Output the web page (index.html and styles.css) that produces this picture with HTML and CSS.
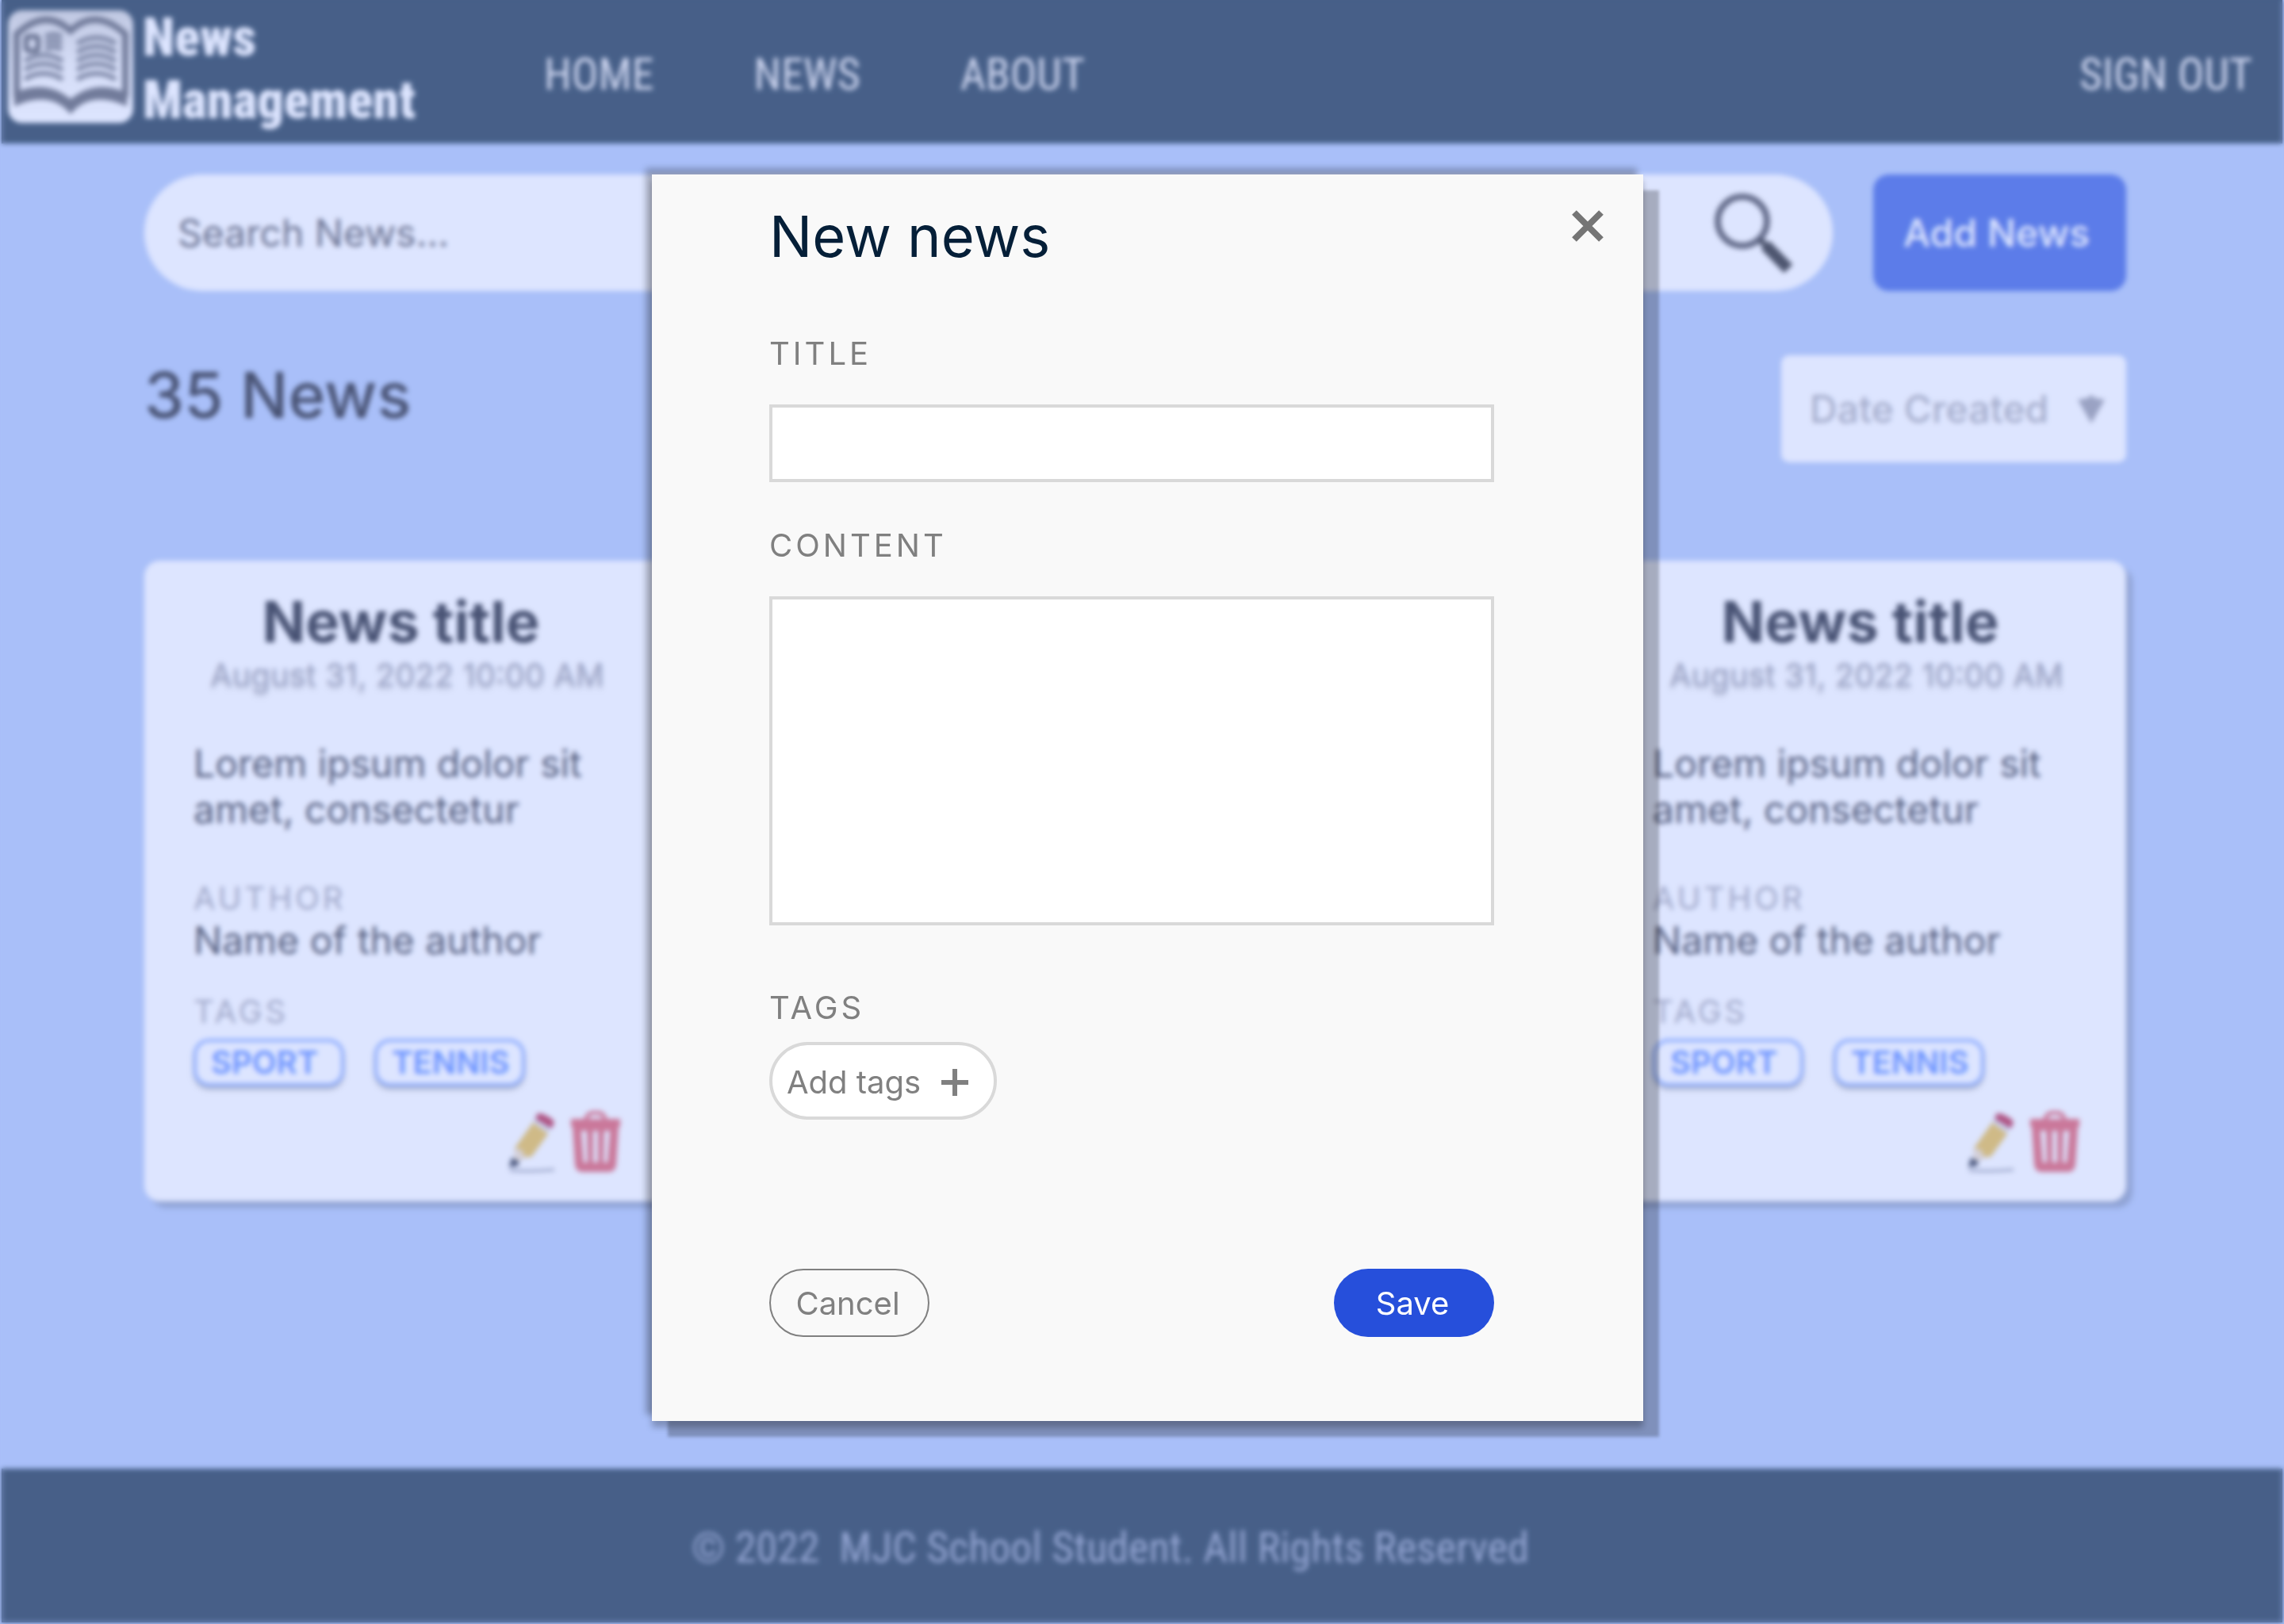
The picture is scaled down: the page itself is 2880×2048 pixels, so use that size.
FILE: index.html
```html
<!DOCTYPE html>
<html lang="en">
<head>
<meta charset="utf-8">
<meta name="viewport" content="width=device-width, initial-scale=1">
<title>News Management</title>
<link rel="stylesheet" href="styles.css">
</head>
<body>
<svg class="sprite" aria-hidden="true">
  <symbol id="pencil" viewBox="0 0 60 76">
    <path d="M2 73Q30 75 58 72" fill="none" stroke="#8a8fa0" stroke-width="3"/>
    <path d="M33 9L52 22L30 55L6 64L8 45Z" fill="#efdcc0"/>
    <path d="M31 13L50 27L29 56L20 55L17 47L8 45Z" fill="#e8b838"/>
    <path d="M4 57L14 62L12 67L1 69Z" fill="#10182c"/>
    <path d="M31 11L51 25L54 20L35 7Z" fill="#d8dce4"/>
    <path d="M37 1Q44 0 56 9Q60 13 54 20L34 8Z" fill="#b30f33"/>
  </symbol>
  <symbol id="trash" viewBox="0 0 64 78">
    <path d="M20 10Q22 2 32 2Q42 2 44 10" fill="none" stroke="#e04a58" stroke-width="5"/>
    <path fill-rule="evenodd" fill="#e04a58" d="M1 10H63V20H61L58 68Q57 77 48 77H16Q7 77 6 68L3 20H1ZM14 25L17 65H22L21 25ZM29 25V65H35V25ZM43 25L42 65H47L50 25Z"/>
  </symbol>
</svg>

<div class="page">
  <header class="header">
    <a class="brand" href="#">
      <svg class="brand-logo" viewBox="0 0 158 142" aria-hidden="true">
        <defs><linearGradient id="tile" x1="0" y1="0" x2="0" y2="1"><stop offset="0" stop-color="#cfcfcf"/><stop offset=".5" stop-color="#f2f2f2"/><stop offset="1" stop-color="#fff"/></linearGradient></defs>
        <rect width="158" height="142" rx="18" fill="url(#tile)"/>
        <path d="M11 110V30Q48-4 79 26Q110-4 148 30V110" fill="none" stroke="#4c4f58" stroke-width="8"/>
        <path d="M8 104Q48 86 79 112Q110 86 150 104V121Q104 100 79 131Q54 100 8 121Z" fill="#4c4f58"/>
        <g fill="none" stroke="#62656e" stroke-width="6">
          <path d="M87 42Q112 27 136 42M87 53Q112 38 136 53M87 64Q112 49 136 64M87 75Q112 60 136 75M87 87Q112 72 136 87"/>
          <path d="M21 64Q45 49 69 64M21 75Q45 60 69 75M21 87Q45 72 69 87"/>
          <path d="M47 33Q58 28 68 33M47 41Q58 36 68 41M47 49Q58 44 68 49"/>
          <rect x="23" y="33" width="15" height="18" rx="3" stroke="#3c3f48"/>
        </g>
      </svg>
      <span class="brand-name">News<br>Management</span>
    </a>
    <nav class="nav">
      <a href="#">HOME</a>
      <a href="#">NEWS</a>
      <a href="#">ABOUT</a>
    </nav>
    <a class="sign-out" href="#">SIGN OUT</a>
  </header>

  <main class="main">
    <div class="toolbar">
      <form class="search" role="search">
        <input class="search-input" type="search" aria-label="Search news" placeholder="Search News...">
        <button class="search-button" type="button" aria-label="Search">
          <svg viewBox="0 0 100 100" aria-hidden="true">
            <circle cx="36" cy="35" r="31" fill="none" stroke="#34343c" stroke-width="8"/>
            <path d="M58 58L68 68" stroke="#111" stroke-width="8"/>
            <path d="M65 65L94 95" stroke="#111" stroke-width="15"/>
          </svg>
        </button>
      </form>
      <button class="add-news" type="button">Add News</button>
    </div>

    <div class="list-head">
      <h1 class="count">35 News</h1>
      <div class="sort">
        <select class="sort-select" aria-label="Sort by"><option>Date Created</option></select>
        <svg class="sort-arrow" viewBox="0 0 34 36" aria-hidden="true"><path d="M0 6L12 4L17 0L22 4L34 6L17 36Z" fill="#8f909c"/></svg>
      </div>
    </div>

    <div class="cards">
      <article class="card">
        <h2 class="card-title">News title</h2>
        <time class="card-date" datetime="2022-08-31T10:00">August 31, 2022 10:00 AM</time>
        <p class="card-text">Lorem ipsum dolor sit amet, consectetur</p>
        <h3 class="card-label">AUTHOR</h3>
        <p class="card-author">Name of the author</p>
        <h3 class="card-label card-label-tags">TAGS</h3>
        <div class="tags"><span class="tag">SPORT</span><span class="tag">TENNIS</span></div>
        <div class="card-actions">
          <button type="button" aria-label="Edit"><svg class="icon-pencil"><use href="#pencil"/></svg></button>
          <button type="button" aria-label="Delete"><svg class="icon-trash"><use href="#trash"/></svg></button>
        </div>
      </article>
      <article class="card">
        <h2 class="card-title">News title</h2>
        <time class="card-date" datetime="2022-08-31T10:00">August 31, 2022 10:00 AM</time>
        <p class="card-text">Lorem ipsum dolor sit amet, consectetur</p>
        <h3 class="card-label">AUTHOR</h3>
        <p class="card-author">Name of the author</p>
        <h3 class="card-label card-label-tags">TAGS</h3>
        <div class="tags"><span class="tag">SPORT</span><span class="tag">TENNIS</span></div>
        <div class="card-actions">
          <button type="button" aria-label="Edit"><svg class="icon-pencil"><use href="#pencil"/></svg></button>
          <button type="button" aria-label="Delete"><svg class="icon-trash"><use href="#trash"/></svg></button>
        </div>
      </article>
    </div>
  </main>

  <footer class="footer">© 2022 &nbsp;MJC School Student. All Rights Reserved</footer>
</div>

<div class="overlay">
  <form class="modal" role="dialog" aria-labelledby="modal-title">
    <button class="close" type="button" aria-label="Close">
      <svg viewBox="0 0 40 40" aria-hidden="true"><path d="M3 3L37 37M37 3L3 37" stroke="#757575" stroke-width="8"/></svg>
    </button>
    <h2 class="modal-title" id="modal-title">New news</h2>
    <label class="field-label" for="news-title">TITLE</label>
    <input class="field" id="news-title" type="text">
    <label class="field-label field-label-content" for="news-content">CONTENT</label>
    <textarea class="field field-area" id="news-content"></textarea>
    <span class="field-label field-label-tags" id="tags-label">TAGS</span>
    <button class="add-tags" type="button" aria-describedby="tags-label">Add tags
      <svg viewBox="0 0 34 34" aria-hidden="true"><path d="M17 0V34M0 17H34" stroke="#808080" stroke-width="6"/></svg>
    </button>
    <div class="modal-actions">
      <button class="pill pill-cancel" type="button">Cancel</button>
      <button class="pill pill-save" type="submit">Save</button>
    </div>
  </form>
</div>
</body>
</html>
```

FILE: styles.css
```css
* {
  box-sizing: border-box;
}

body,
h1,
h2,
h3,
p {
  margin: 0;
}

body {
  background: #a8c0f5;
  color: #080c18;
  font-family: Inter, "Liberation Sans", sans-serif;
  font-size: 48px;
  line-height: 58px;
}

button,
input,
select,
textarea {
  margin: 0;
  padding: 0;
  border: 0;
  background: none;
  color: inherit;
  font: inherit;
}

a {
  color: inherit;
  text-decoration: none;
}

svg {
  display: block;
}

.sprite {
  position: absolute;
  width: 0;
  height: 0;
}

.page {
  display: flex;
  flex-direction: column;
  min-height: 100vh;
  padding: 0 2px 2px;
}

/* Header */

.header {
  display: flex;
  align-items: center;
  height: 181px;
  padding: 6px 38px 0 8px;
  background: #05213a;
  color: #e4e4e4;
  font-family: "Roboto Condensed", "Liberation Sans Narrow", "Open Sans", sans-serif;
  font-size: 56px;
}

.brand {
  display: flex;
  align-items: flex-start;
  align-self: flex-start;
  gap: 12px;
  width: 676px;
  color: #fff;
}

.brand-logo {
  width: 158px;
  height: 142px;
  margin-top: 7px;
}

.brand-name {
  padding-top: 2px;
  font-size: 66px;
  font-weight: 900;
  line-height: 79px;
}

.nav {
  display: flex;
  gap: 126px;
  flex: 1;
}

/* Listing */

.main {
  flex: 1;
  padding: 39px 197px 64px 180px;
}

.toolbar {
  display: flex;
  gap: 51px;
}

.search {
  display: flex;
  align-items: center;
  flex: 1;
  height: 147px;
  padding: 0 50px 0 42px;
  border-radius: 74px;
  background: #fff;
}

.search-input {
  flex: 1;
  min-width: 0;
  outline: 0;
}

.search-input::placeholder {
  color: #44444c;
  opacity: 1;
}

.search-button {
  width: 100px;
}

.add-news {
  width: 319px;
  padding-right: 8px;
  border-radius: 20px;
  background: #2851da;
  color: #fff;
  font-weight: 500;
}

.list-head {
  display: flex;
  justify-content: space-between;
  align-items: flex-start;
  padding-top: 81px;
}

.count {
  font-size: 80px;
  font-weight: 500;
  line-height: 100px;
}

.sort {
  position: relative;
  color: #a4a4ac;
}

.sort-select {
  width: 435px;
  height: 135px;
  padding: 0 36px;
  border-radius: 10px;
  background: #fff;
  font-weight: 500;
  appearance: none;
}

.sort-arrow {
  position: absolute;
  top: 50px;
  right: 27px;
  width: 34px;
  height: 36px;
  pointer-events: none;
}

.cards {
  display: flex;
  justify-content: space-between;
  padding-top: 124px;
}

.card {
  width: 659px;
  padding: 34px 58px 36px 62px;
  border-radius: 20px;
  background: #fff;
  box-shadow: 8px 8px 4px rgba(0, 0, 0, .25);
}

.card-title {
  padding-right: 16px;
  font-size: 72px;
  font-weight: 700;
  line-height: 86px;
  text-align: center;
}

.card-date {
  display: block;
  color: #9a9aa6;
  font-size: 40px;
  line-height: 48px;
  text-align: center;
  text-shadow: 0 4px 4px rgba(0, 0, 0, .25);
}

.card-text {
  padding-top: 59px;
  color: #20222c;
}

.card-label {
  padding-top: 59px;
  color: #9a9aa6;
  font-size: 40px;
  font-weight: 400;
  letter-spacing: 4px;
  line-height: 48px;
}

.card-label-tags {
  padding-top: 37px;
}

.card-author {
  color: #20222c;
}

.tags {
  display: flex;
  gap: 38px;
  padding-top: 10px;
}

.tag {
  min-width: 190px;
  height: 60px;
  padding: 0 14px 0 18px;
  border: 4px solid #7aa0ff;
  border-radius: 20px;
  box-shadow: 0 4px 4px rgba(0, 0, 0, .35);
  color: #4478ff;
  font-size: 40px;
  font-weight: 600;
  line-height: 52px;
}

.card-actions {
  display: flex;
  justify-content: flex-end;
  align-items: flex-end;
  gap: 18px;
  padding-top: 31px;
}

.icon-pencil {
  width: 60px;
  height: 76px;
}

.icon-trash {
  width: 64px;
  height: 78px;
}

/* Footer */

.footer {
  padding: 71px 80px 65px 0;
  background: #05213a;
  color: #8494b4;
  font-family: "Roboto Condensed", "Liberation Sans Narrow", "Open Sans", sans-serif;
  font-size: 54px;
  text-align: center;
}

/* Dialog */

.overlay {
  position: fixed;
  inset: 0;
  display: flex;
  justify-content: center;
  align-items: flex-start;
  padding: 220px 0 0 14px;
  background: rgba(170, 190, 255, .4);
  backdrop-filter: blur(3px);
}

.modal {
  position: relative;
  display: flex;
  flex-direction: column;
  align-items: flex-start;
  width: 1250px;
  padding: 34px 188px 106px 148px;
  background: #f9f9f9;
  box-shadow:
    -8px -8px 8px rgba(0, 0, 0, .25),
    0 8px 8px rgba(0, 0, 0, .25),
    20px 20px 4px rgba(0, 0, 0, .25);
  color: #808080;
  font-size: 40px;
  font-weight: 400;
  line-height: 48px;
}

.close {
  position: absolute;
  top: 45px;
  right: 50px;
  width: 40px;
  height: 40px;
}

.modal-title {
  color: #051f38;
  font-size: 72px;
  font-weight: 400;
  line-height: 88px;
}

.field-label {
  padding: 80px 0 40px;
  letter-spacing: 4px;
}

.field-label-content {
  padding-top: 56px;
}

.field-label-tags {
  padding: 80px 0 19px;
}

.field {
  width: 100%;
  height: 98px;
  padding: 0 24px;
  border: 4px solid #d9d9d9;
  background: #fff;
}

.field-area {
  display: block;
  height: 415px;
  padding: 24px;
  resize: none;
}

.add-tags {
  display: flex;
  align-items: center;
  gap: 26px;
  height: 98px;
  padding: 4px 32px 0 18px;
  border: 4px solid #d9d9d9;
  border-radius: 49px;
  background: #fff;
}

.add-tags svg {
  width: 34px;
  height: 34px;
}

.modal-actions {
  display: flex;
  justify-content: space-between;
  width: 100%;
  padding-top: 188px;
}

.pill {
  width: 202px;
  height: 86px;
  padding: 2px 4px 0 0;
  border-radius: 43px;
}

.pill-cancel {
  border: 2px solid #808080;
}

.pill-save {
  background: #264fdb;
  color: #fff;
}
```
